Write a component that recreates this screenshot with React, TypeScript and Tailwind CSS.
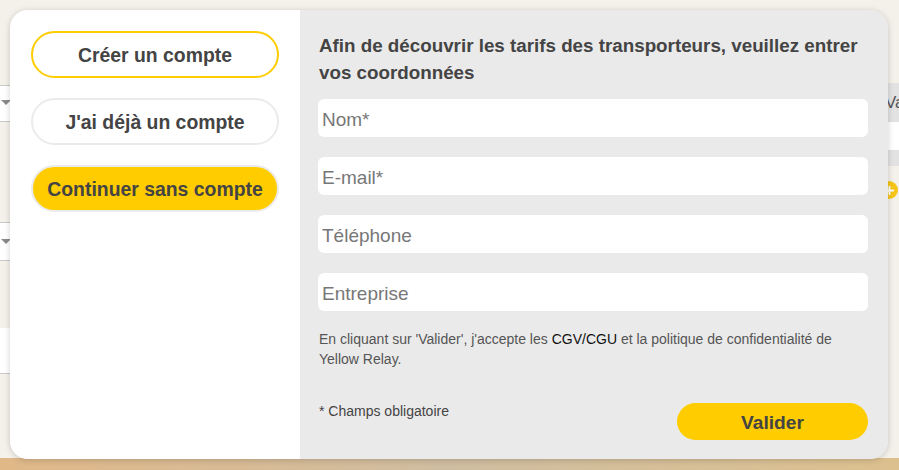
import { Plus } from "lucide-react";

const font = { fontFamily: '"Liberation Sans", Arial, sans-serif' };

const fields = ["Nom*", "E-mail*", "Téléphone", "Entreprise"];

function Backdrop() {
  return (
    <div className="absolute inset-0">
      {/* left strip: bits of the page behind the modal */}
      <div className="absolute left-0 top-[85px] h-[37px] w-[12px] border-y border-[#c9c9c9] bg-white">
        <span className="absolute left-[1px] top-[14px] h-0 w-0 border-x-[5px] border-t-[5px] border-x-transparent border-t-[#8a8a8a]" />
      </div>
      <div className="absolute left-0 top-[222px] h-[39px] w-[12px] border-y border-[#c9c9c9] bg-white">
        <span className="absolute left-[1px] top-[16px] h-0 w-0 border-x-[5px] border-t-[5px] border-x-transparent border-t-[#8a8a8a]" />
      </div>
      <div className="absolute left-0 top-[328px] h-[46px] w-[12px] border-b border-[#c9c9c9] bg-white" />
      {/* right strip */}
      <div className="absolute right-0 top-[83px] flex h-[39px] w-[14px] items-center overflow-hidden bg-[#e2e2e2] text-[17px] text-[#555]">
        Va
      </div>
      <div className="absolute right-0 top-[122px] h-[28px] w-[14px] bg-white" />
      <div className="absolute right-0 top-[150px] h-[16px] w-[14px] bg-[#e2e2e2]" />
      <div className="absolute left-[880px] top-[181px] flex h-[18px] w-[18px] items-center justify-center rounded-full bg-[#f5c518]">
        <Plus className="h-[13px] w-[13px] text-white" strokeWidth={3.5} />
      </div>
      <div className="absolute bottom-0 left-0 h-[12px] w-full bg-gradient-to-r from-[#e0b888] via-[#cfbda0] to-[#dcc08e]" />
    </div>
  );
}

export default function App() {
  return (
    <div className="relative h-[470px] w-[899px] overflow-hidden bg-[#f4f0ea]" style={font}>
      <Backdrop />
      <div className="relative pl-[10px] pt-[10px]">
        <div className="flex h-[449px] w-[878px] overflow-hidden rounded-[18px] shadow-[0_1px_6px_rgba(0,0,0,0.18)]">
          <div className="flex w-[290px] flex-col gap-[20px] bg-white pl-[21px] pt-[21px]">
            <button
              type="button"
              className="h-[47px] w-[248px] rounded-full border-2 border-[#ffcc00] bg-white pt-[2px] text-[19.4px] font-bold text-[#444]"
            >
              Créer un compte
            </button>
            <button
              type="button"
              className="h-[47px] w-[248px] rounded-full border-2 border-[#ebebeb] bg-white pt-[2px] text-[19.4px] font-bold text-[#444]"
            >
              J'ai déjà un compte
            </button>
            <button
              type="button"
              className="h-[47px] w-[248px] rounded-full border-2 border-[#ebebeb] bg-[#ffcc00] pt-[2px] text-[19.4px] font-bold text-[#444]"
            >
              Continuer sans compte
            </button>
          </div>

          <div className="flex flex-1 flex-col bg-[#eaeaea] pb-[19px] pl-[18px] pr-[20px] pt-[22px]">
            <h2 className="pl-[1px] text-[18.8px] font-bold leading-[27px] text-[#444]">
              Afin de découvrir les tarifs des transporteurs, veuillez entrer vos coordonnées
            </h2>
            <div className="mt-[13px] flex flex-col gap-[20px]">
              {fields.map((f) => (
                <input
                  key={f}
                  placeholder={f}
                  className="h-[38px] w-full rounded-[6px] bg-white px-[4px] pt-[3px] text-[19px] text-[#444] outline-none placeholder:text-[#777]"
                />
              ))}
            </div>
            <p className="mt-[18px] pl-[1px] text-[14px] leading-[20px] text-[#555]">
              En cliquant sur 'Valider', j'accepte les <span className="text-[#111]">CGV/CGU</span> et la politique de confidentialité de Yellow Relay.
            </p>
            <div className="mt-auto flex items-end justify-between">
              <p className="mb-[18px] pl-[1px] text-[14px] text-[#444]">* Champs obligatoire</p>
              <button
                type="button"
                className="h-[37px] w-[191px] rounded-full bg-[#ffcc00] pt-[3px] text-[19.2px] font-bold text-[#444]"
              >
                Valider
              </button>
            </div>
          </div>
        </div>
      </div>
    </div>
  );
}
